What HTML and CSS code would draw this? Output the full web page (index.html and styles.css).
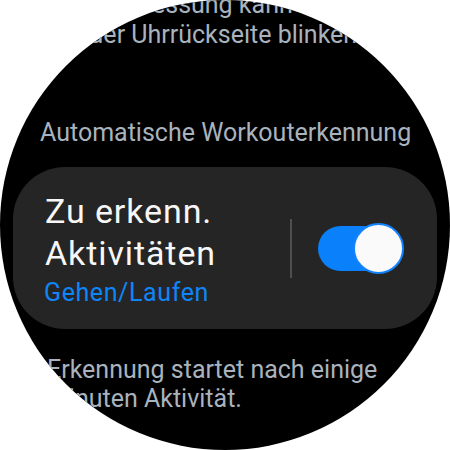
FILE: index.html
```html
<!DOCTYPE html>
<html lang="de">
<head>
<meta charset="utf-8">
<link rel="stylesheet" href="styles.css">
</head>
<body>
<div class="watch">
  <div class="scroll">
    <p class="note top-note">Bei der Messung kann die LED auf der Uhrrückseite blinken.</p>
    <h2 class="section">Automatische Workouterkennung</h2>
    <div class="card">
      <div class="card-text">
        <div class="title">Zu erkenn.<br>Aktivitäten</div>
        <div class="sub">Gehen/Laufen</div>
      </div>
      <div class="divider"></div>
      <div class="toggle">
        <div class="track"></div>
        <div class="thumb"></div>
      </div>
    </div>
    <p class="note bottom-note">Erkennung startet nach einige Minuten Aktivität.</p>
  </div>
</div>
</body>
</html>
```
FILE: styles.css
```css
html, body {
  margin: 0;
  padding: 0;
  background: #ffffff;
}
body {
  width: 450px;
  height: 450px;
  overflow: hidden;
  font-family: Roboto, "Noto Sans", sans-serif;
}
.watch {
  width: 450px;
  height: 450px;
  border-radius: 50%;
  background: #000000;
  overflow: hidden;
}
.scroll {
  display: flex;
  flex-direction: column;
  margin-top: -10.5px;
}
.note {
  margin: 0;
  padding: 0 47px;
  font-size: 25px;
  line-height: 30px;
  color: #a9b3bd;
}
.section {
  margin: 68.5px 0 0;
  padding: 0 0 0 40px;
  white-space: nowrap;
  font-size: 25px;
  font-weight: 400;
  line-height: 30px;
  color: #a9b3bd;
}
.card {
  margin: 19px 13px 0;
  height: 162px;
  box-sizing: border-box;
  border-radius: 52px;
  background: #252525;
  display: flex;
  align-items: center;
  padding: 0 33px 0 31px;
}
.card-text {
  flex: 1;
  display: flex;
  flex-direction: column;
  padding-top: 2px;
}
.title {
  font-size: 34px;
  line-height: 42px;
  letter-spacing: 0.9px;
  color: #f7f7f7;
  padding-left: 1px;
}
.sub {
  margin-top: 4px;
  font-size: 25px;
  line-height: 30px;
  letter-spacing: 0.6px;
  color: #0f86f8;
}
.divider {
  width: 2px;
  height: 59px;
  background: #4f4f4f;
  margin-right: 26px;
}
.toggle {
  position: relative;
  width: 86px;
  height: 51px;
  display: flex;
  align-items: center;
}
.track {
  width: 82px;
  height: 45px;
  border-radius: 23px;
  background: #0a80fa;
}
.thumb {
  position: absolute;
  right: 0;
  top: 0;
  width: 51px;
  height: 51px;
  box-sizing: border-box;
  border: 2px solid #1384ff;
  border-radius: 50%;
  background: #fafafa;
}
.bottom-note {
  margin-top: 26px;
  line-height: 29px;
}
```
